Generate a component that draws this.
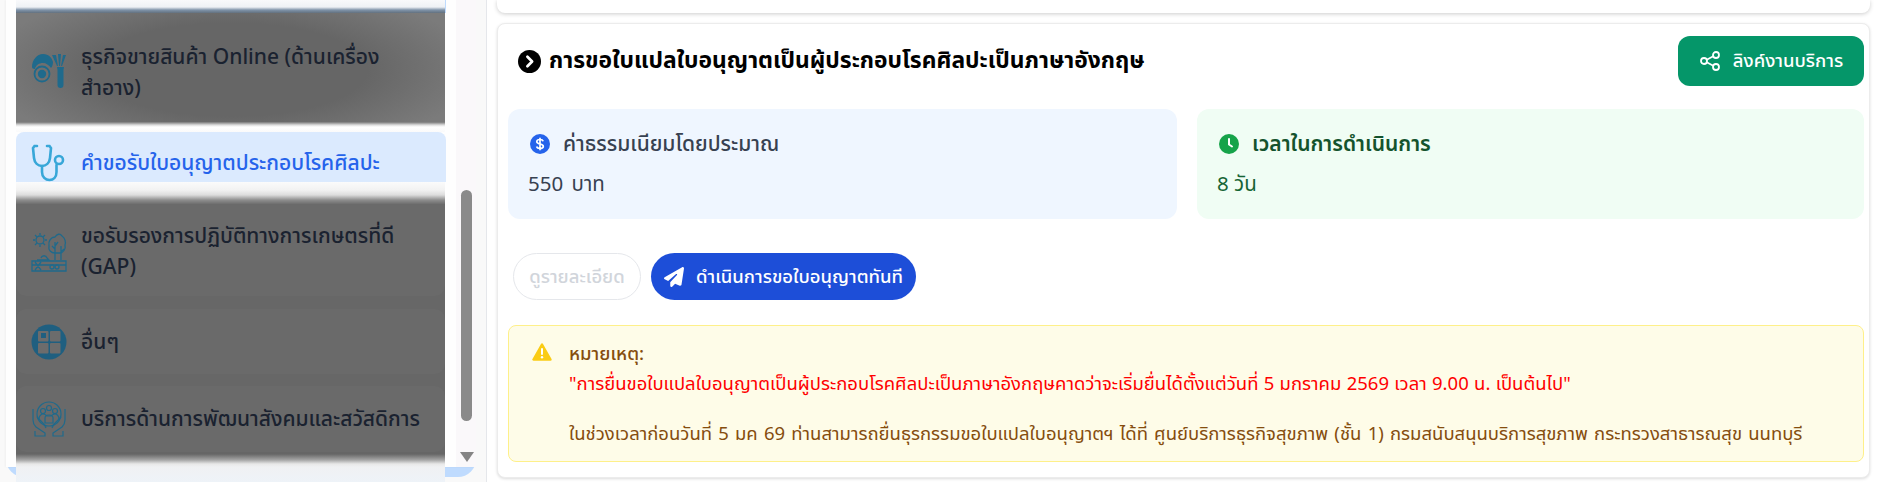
<div class="page">
  <aside class="side">
    <div class="panel">
      <div class="panel-inner">
        <div class="list">
          <div class="strip-top"></div>
          <div class="item dark first">
            <svg class="ico" viewBox="0 0 36 36" width="36" height="36">
              <path d="M1 14C1 7 6 1 12 1c6 0 9 4 10 8 0 3-1 5-2 6-2-3-5-5-8-5-4 0-7 2-8 6-2 0-3-1-3-2z" fill="#1f6a8c"/>
              <circle cx="11" cy="21" r="7.500" fill="none" stroke="#1f6a8c" stroke-width="1.800"/>
              <circle cx="11" cy="21" r="4.200" fill="#1f6a8c"/>
              <path d="M21 2l5 11h1L25 2zM27 1l1 12h1l1-12zM32 2l-2 11h1l4-11z" fill="#1f6a8c"/>
              <path d="M26 14h7l-.5 3v15a3 3 0 0 1-6 0V17z" fill="#1f6a8c"/>
            </svg>
            <span>ธุรกิจขายสินค้า Online (ด้านเครื่องสำอาง)</span>
          </div>
          <div class="gap-a"></div>
          <div class="item selected">
            <svg class="ico" viewBox="0 0 36 38" width="36" height="38" fill="none" stroke="#38a7d8" stroke-width="2.600" stroke-linecap="round">
              <path d="M6 2H3.500L2 4l1 10c.6 5 4 8 8 8s7.500-3 8-8l1-10-1.500-2H16"/>
              <path d="M11 22v6c0 5 3.500 8 7.500 8s7-3 7-8v-7"/>
              <circle cx="28" cy="16" r="4"/>
            </svg>
            <span>คำขอรับใบอนุญาตประกอบโรคศิลปะ</span>
          </div>
          <div class="gap-b"></div>
          <div class="dark-block">
            <div class="item card g">
              <svg class="ico" viewBox="0 0 36 40" width="36" height="40" fill="none" stroke="#1f6a8c" stroke-width="1.300">
                <circle cx="9" cy="8" r="4"/>
                <path d="M9 1v2M9 13v2M2 8h2M14 8h2M4 3l2 2M12 11l2 2M4 13l2-2M12 5l2-2"/>
                <path d="M24 21c-4 0-7-3-6-7-1-5 2-9 6-9 2-3 5-4 7-1 3 2 4 6 3 9 1 4-2 8-5 8z"/>
                <path d="M24 28V10M24 17l-3-3M24 14l3-4M30 28V14M30 20l3-3"/>
                <path d="M10 26c1-3 5-3 6 0l2 2H6"/>
                <path d="M1 29h34v10H1zM1 33h34M4 30l6 8M10 30l-6 8"/>
                <circle cx="21" cy="35" r="2"/><circle cx="26" cy="35" r="2"/>
              </svg>
              <span>ขอรับรองการปฏิบัติทางการเกษตรที่ดี (GAP)</span>
            </div>
            <div class="item card o">
              <svg class="ico" viewBox="0 0 36 36" width="36" height="36">
                <circle cx="18" cy="18" r="17.500" fill="#1f5f80"/>
                <rect x="7" y="7" width="10.500" height="10.500" rx="1" fill="#6c6c6c"/>
                <rect x="10" y="9" width="5" height="5" fill="#1f5f80"/>
                <rect x="19" y="7" width="10.500" height="10.500" rx="1" fill="#6c6c6c"/>
                <rect x="7" y="19" width="10.500" height="10.500" rx="1" fill="#6c6c6c"/>
                <rect x="19" y="19" width="10.500" height="10.500" rx="1" fill="#6c6c6c"/>
              </svg>
              <span>อื่นๆ</span>
            </div>
            <div class="item card s">
              <svg class="ico" viewBox="0 0 36 36" width="36" height="36" fill="none" stroke="#1f6a8c" stroke-width="1.200">
                <circle cx="18" cy="13" r="12"/>
                <circle cx="18" cy="7" r="2.500"/><circle cx="12" cy="10" r="2.500"/><circle cx="24" cy="10" r="2.500"/>
                <path d="M8 18c0-4 3-5 4-5s3 1 4 2h4c1-1 3-2 4-2s4 1 4 5"/>
                <path d="M14 17c0-4 8-4 8 0v5h-8z"/>
                <path d="M2 8v11c0 3 1 5 3 7l9 6v3H4v-5M34 8v11c0 3-1 5-3 7l-9 6v3h10v-5"/>
                <path d="M6 16l7 7 2 4M30 16l-7 7-2 4"/>
              </svg>
              <span>บริการด้านการพัฒนาสังคมและสวัสดิการ</span>
            </div>
            <div class="fade"></div>
          </div>
        </div>
        <div class="scroll">
          <div class="thumb"></div>
          <div class="arrow"></div>
        </div>
      </div>
    </div>
  </aside>

  <main class="main">
    <div class="top-card"></div>
    <section class="card-main">
      <header class="head">
        <h2>
          <svg viewBox="0 0 22 22" width="23" height="23"><circle cx="11" cy="11" r="11" fill="#000"/><path d="M9 6.500l4.500 4.500L9 15.500" fill="none" stroke="#fff" stroke-width="2.600" stroke-linecap="round" stroke-linejoin="round"/></svg>
          การขอใบแปลใบอนุญาตเป็นผู้ประกอบโรคศิลปะเป็นภาษาอังกฤษ
        </h2>
        <button class="link">
          <svg viewBox="0 0 22 22" width="22" height="22" fill="none" stroke="#fff" stroke-width="1.800"><circle cx="5" cy="11" r="3"/><circle cx="17" cy="5" r="3"/><circle cx="17" cy="17" r="3"/><path d="M7.700 9.700l6.600-3.400M7.700 12.300l6.600 3.400"/></svg>
          ลิงค์งานบริการ
        </button>
      </header>
      <div class="stats">
        <div class="stat fee">
          <div class="stat-title">
            <svg viewBox="0 0 20 20" width="20" height="20"><circle cx="10" cy="10" r="10" fill="#2563eb"/><path d="M13.200 7.300C12.800 6 11.500 5.500 10 5.500c-1.800 0-3.200.9-3.200 2.300 0 3 6.500 1.500 6.500 4.400 0 1.400-1.500 2.300-3.300 2.300-1.600 0-3-.6-3.400-1.900M10 3.700v12.600" fill="none" stroke="#fff" stroke-width="1.700"/></svg>
            <b>ค่าธรรมเนียมโดยประมาณ</b>
          </div>
          <p>550 บาท</p>
        </div>
        <div class="stat time">
          <div class="stat-title">
            <svg viewBox="0 0 20 20" width="20" height="20"><circle cx="10" cy="10" r="10" fill="#16a34a"/><path d="M10 5v5.500l3 2" fill="none" stroke="#fff" stroke-width="2" stroke-linecap="round" stroke-linejoin="round"/></svg>
            <b>เวลาในการดำเนินการ</b>
          </div>
          <p>8 วัน</p>
        </div>
      </div>
      <div class="actions">
        <button class="ghost">ดูรายละเอียด</button>
        <button class="go">
          <svg viewBox="0 0 512 512" width="20" height="20"><path fill="#fff" d="M498.100 5.600c10.100 7 15.400 19.100 13.500 31.200l-64 416c-1.500 9.700-7.400 18.200-16 23s-18.900 5.400-28 1.600L284 427.700l-68.500 74.100c-8.900 9.700-22.900 12.900-35.200 8.100S160 493.200 160 480V396.400c0-4 1.500-7.800 4.200-10.700L331.800 202.800c5.800-6.300 5.600-16-.4-22s-15.700-6.400-22-.7L106 360.800 17.700 316.600C7.100 311.300 .3 300.700 0 288.900s5.900-22.800 16.100-28.700l448-256c10.700-6.100 23.900-5.500 34 1.400z"/></svg>
          ดำเนินการขอใบอนุญาตทันที
        </button>
      </div>
      <div class="note">
        <svg viewBox="0 0 20 18" width="20" height="18"><path d="M10 1.500L1.500 16.500h17z" fill="#facc15" stroke="#facc15" stroke-width="2.400" stroke-linejoin="round"/><path d="M10 6v5" stroke="#fff" stroke-width="2" stroke-linecap="round"/><circle cx="10" cy="14.200" r="1.200" fill="#fff"/></svg>
        <div class="note-text">
          <div class="nh">หมายเหตุ:</div>
          <div class="nr">"การยื่นขอใบแปลใบอนุญาตเป็นผู้ประกอบโรคศิลปะเป็นภาษาอังกฤษคาดว่าจะเริ่มยื่นได้ตั้งแต่วันที่ 5 มกราคม 2569 เวลา 9.00 น. เป็นต้นไป"</div>
          <div class="nb">ในช่วงเวลาก่อนวันที่ 5 มค 69 ท่านสามารถยื่นธุรกรรมขอใบแปลใบอนุญาตฯ ได้ที่ ศูนย์บริการธุรกิจสุขภาพ (ชั้น 1) กรมสนับสนุนบริการสุขภาพ กระทรวงสาธารณสุข นนทบุรี</div>
        </div>
      </div>
    </section>
  </main>
</div>

<style>
  :global(body) { margin: 0; background: #fff; }
  * { box-sizing: border-box; }
  .page {
    display: flex; width: 1883px; height: 482px; overflow: hidden;
    font-family: "Noto Sans Thai", "Noto Sans", "Inter", sans-serif;
    background: #fff;
  }
  .side {
    width: 487px; flex: none; background: #f9f9f9;
    border-right: 1px solid #e5e7eb; padding-left: 6px; overflow: hidden;
    height: 482px;
  }
  .panel {
    width: 470px; height: 477px; background: #bfdbfe;
    border-radius: 0 0 18px 18px;
  }
  .panel-inner {
    display: flex; height: 467px; background: #fefefe;
    box-shadow: -1px 0 2px rgba(0,0,0,.04);
  }
  .list { width: 430px; margin-left: 10px; height: 482px; flex: none; }
  .strip-top {
    height: 13px;
    background: linear-gradient(#f8f9fb 0, #eef1f5 7px, #7f93a9 10px, #63717f 13px);
    border-right: 1px solid #bfdbfe;
  }
  .item {
    display: flex; align-items: center; gap: 14px;
    padding-left: 15px; font-size: 21px; font-weight: 500; line-height: 31px;
    color: #1a2230;
  }
  .item .ico { flex: none; }
  .item span { width: 350px; }
  .dark {
    height: 109px; width: 429px;
    background: radial-gradient(ellipse 58% 78% at 50% 52%, #666 55%, #7b7b7b 100%);
  }
  .first { padding-top: 7px; }
  .first span { margin-top: 3px; }
  .gap-a {
    height: 10px; width: 429px;
    background: linear-gradient(#777 0, #ddd 3px, #fff 5px, #fafafa 100%);
  }
  .selected {
    height: 50px; background: #dbeafe; color: #2563eb;
    border-radius: 8px 8px 0 0; padding-top: 12px;
  }
  .gap-b {
    height: 23px; width: 429px;
    background: linear-gradient(#fbfbfb 0, #f2f2f2 8px, #dcdcdc 13px, #8e8e8e 18px, #666 23px);
  }
  .dark-block {
    width: 429px; height: 277px; background: #676767;
    display: flex; flex-direction: column;
  }
  .card { background: #6a6a6a; width: 429px; }
  .g { height: 91px; margin-bottom: 13px; padding-top: 2px; border-radius: 0 0 10px 10px; }
  .o { height: 65px; margin-bottom: 12px; border-radius: 10px; padding-top: 1px; }
  .s { height: 66px; border-radius: 10px; }
  .fade {
    flex: 1; margin-top: 0;
    background: linear-gradient(#666 0, #666 2px, #a6a6a6 8px, #e8e8e8 12px, #f0f1f3 15px, #eef3f8 100%);
  }
  .scroll {
    width: 20px; margin-left: 10px; background: #faf8fa; height: 467px;
    padding-left: 5px; padding-top: 190px;
  }
  .thumb { width: 11px; height: 231px; background: #8a8a8a; border-radius: 6px; }
  .arrow {
    width: 0; height: 0; margin: 31px 0 0 -1px;
    border-left: 7px solid transparent; border-right: 7px solid transparent;
    border-top: 10px solid #858585;
  }

  .main { flex: 1; padding-left: 10px; width: 1396px; background: #fff; }
  .top-card {
    width: 1373px; height: 13px; background: #fff; border-radius: 0 0 8px 8px;
    box-shadow: 0 1px 4px rgba(0,0,0,.2);
  }
  .card-main {
    margin-top: 10px; width: 1373px; height: 455px; background: #fff;
    border-radius: 8px; border: 1px solid #ececec;
    box-shadow: 0 1px 3px rgba(0,0,0,.14);
    padding: 12px 5px 0 10px;
  }
  .head { display: flex; justify-content: space-between; height: 50px; align-items: center; }
  h2 {
    margin: 0 0 0 10px; font-size: 22.8px; font-weight: 700; color: #000;
    display: flex; align-items: center; gap: 8px; line-height: 28px;
  }
  button { font-family: inherit; border: 0; cursor: pointer; padding: 0; }
  .link {
    width: 186px; height: 50px; background: #059669; color: #fff; border-radius: 12px;
    font-size: 18.5px; font-weight: 500; display: flex; align-items: center; justify-content: center; gap: 12px;
  }
  .stats { display: grid; grid-template-columns: 669px 667px; gap: 20px; margin-top: 23px; height: 110px; }
  .stat { border-radius: 12px; padding: 19px 20px 0; }
  .fee { background: #eff6ff; color: #374151; }
  .time { background: #f0fdf4; color: #166534; }
  .stat-title { display: flex; align-items: center; gap: 13px; height: 32px; font-size: 21px; padding-left: 2px; }
  .stat-title b { font-weight: 500; }
  .fee b { color: #374151; }
  .time b { color: #14532d; font-weight: 600; }
  .stat p { margin: 9px 0 0; font-size: 20.5px; line-height: 32px; }
  .fee p { word-spacing: 3px; }
  .actions { display: flex; gap: 10px; margin: 34px 0 0 5px; }
  .ghost {
    width: 128px; height: 47px; border-radius: 24px; background: #fff;
    border: 1px solid #e5e7eb; color: #d1d5db; font-size: 18.5px; font-weight: 500;
  }
  .go {
    width: 265px; height: 47px; border-radius: 24px; background: #1d4ed8; color: #fff;
    font-size: 18.5px; font-weight: 500; display: flex; align-items: center; justify-content: center; gap: 12px;
  }
  .note {
    margin-top: 25px; height: 137px; background: #fefce8; border: 1px solid #fef08a;
    border-radius: 8px; padding: 17px 24px 0 23px; display: flex; gap: 17px;
  }
  .note svg { flex: none; }
  .note-text { font-size: 18.5px; line-height: 24px; margin-top: -1px; }
  .nh { color: #854d0e; font-weight: 500; height: 29px; }
  .nr { color: #ff0000; height: 50px; margin-top: 1px; word-spacing: .5px; }
  .nb { color: #854d0e; word-spacing: 1.4px; }
</style>
